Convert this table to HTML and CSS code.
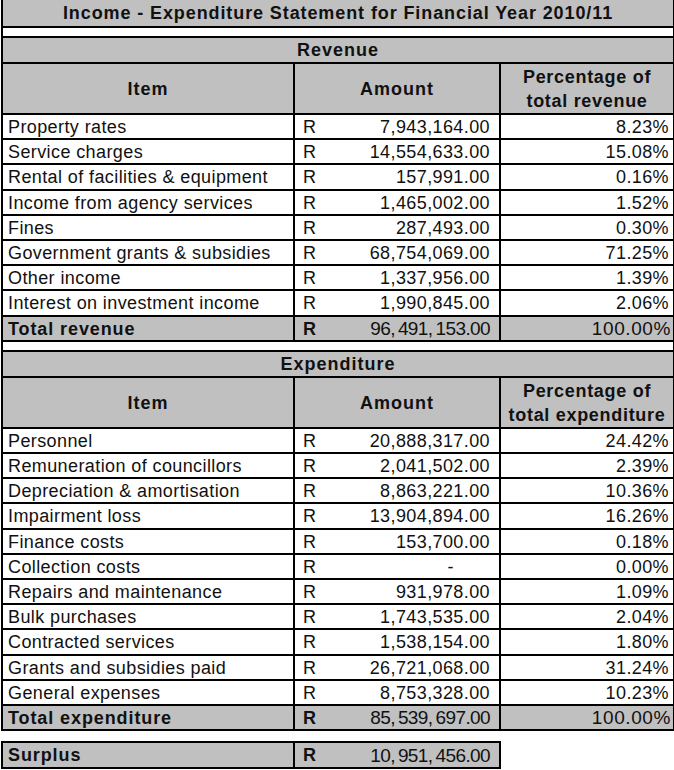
FILE: index.html
```html
<!DOCTYPE html>
<html lang="en">
<head>
<meta charset="utf-8">
<title>Income - Expenditure Statement</title>
<link rel="stylesheet" href="styles.css">
</head>
<body>
<table class="sheet">
  <colgroup><col class="c-item"><col class="c-amt"><col class="c-pct"></colgroup>
  <tr class="title"><td colspan="3">Income - Expenditure Statement for Financial Year 2010/11</td></tr>
  <tr class="gap"><td colspan="3"><div class="gap-in"></div></td></tr>
  <tr class="section"><td colspan="3">Revenue</td></tr>
  <tr class="head"><th>Item</th><th>Amount</th><th>Percentage of<br>total revenue</th></tr>
  <tr><td class="item">Property rates</td><td><div class="money"><span class="r">R</span><span>7,943,164.00</span></div></td><td class="pct">8.23%</td></tr>
  <tr><td class="item">Service charges</td><td><div class="money"><span class="r">R</span><span>14,554,633.00</span></div></td><td class="pct">15.08%</td></tr>
  <tr><td class="item">Rental of facilities &amp; equipment</td><td><div class="money"><span class="r">R</span><span>157,991.00</span></div></td><td class="pct">0.16%</td></tr>
  <tr><td class="item">Income from agency services</td><td><div class="money"><span class="r">R</span><span>1,465,002.00</span></div></td><td class="pct">1.52%</td></tr>
  <tr><td class="item">Fines</td><td><div class="money"><span class="r">R</span><span>287,493.00</span></div></td><td class="pct">0.30%</td></tr>
  <tr><td class="item">Government grants &amp; subsidies</td><td><div class="money"><span class="r">R</span><span>68,754,069.00</span></div></td><td class="pct">71.25%</td></tr>
  <tr><td class="item">Other income</td><td><div class="money"><span class="r">R</span><span>1,337,956.00</span></div></td><td class="pct">1.39%</td></tr>
  <tr><td class="item">Interest on investment income</td><td><div class="money"><span class="r">R</span><span>1,990,845.00</span></div></td><td class="pct">2.06%</td></tr>
  <tr class="total"><td class="item">Total revenue</td><td><div class="money"><span class="r">R</span><span class="tnum">96<span class="cm">,</span>491<span class="cm">,</span>153.00</span></div></td><td class="pct">100.00%</td></tr>
  <tr class="gap"><td colspan="3"><div class="gap-in"></div></td></tr>
  <tr class="section"><td colspan="3">Expenditure</td></tr>
  <tr class="head"><th>Item</th><th>Amount</th><th>Percentage of<br>total expenditure</th></tr>
  <tr><td class="item">Personnel</td><td><div class="money"><span class="r">R</span><span>20,888,317.00</span></div></td><td class="pct">24.42%</td></tr>
  <tr><td class="item">Remuneration of councillors</td><td><div class="money"><span class="r">R</span><span>2,041,502.00</span></div></td><td class="pct">2.39%</td></tr>
  <tr><td class="item">Depreciation &amp; amortisation</td><td><div class="money"><span class="r">R</span><span>8,863,221.00</span></div></td><td class="pct">10.36%</td></tr>
  <tr><td class="item">Impairment loss</td><td><div class="money"><span class="r">R</span><span>13,904,894.00</span></div></td><td class="pct">16.26%</td></tr>
  <tr><td class="item">Finance costs</td><td><div class="money"><span class="r">R</span><span>153,700.00</span></div></td><td class="pct">0.18%</td></tr>
  <tr><td class="item">Collection costs</td><td><div class="money"><span class="r">R</span><span class="dash">-</span></div></td><td class="pct">0.00%</td></tr>
  <tr><td class="item">Repairs and maintenance</td><td><div class="money"><span class="r">R</span><span>931,978.00</span></div></td><td class="pct">1.09%</td></tr>
  <tr><td class="item">Bulk purchases</td><td><div class="money"><span class="r">R</span><span>1,743,535.00</span></div></td><td class="pct">2.04%</td></tr>
  <tr><td class="item">Contracted services</td><td><div class="money"><span class="r">R</span><span>1,538,154.00</span></div></td><td class="pct">1.80%</td></tr>
  <tr><td class="item">Grants and subsidies paid</td><td><div class="money"><span class="r">R</span><span>26,721,068.00</span></div></td><td class="pct">31.24%</td></tr>
  <tr><td class="item">General expenses</td><td><div class="money"><span class="r">R</span><span>8,753,328.00</span></div></td><td class="pct">10.23%</td></tr>
  <tr class="total"><td class="item">Total expenditure</td><td><div class="money"><span class="r">R</span><span class="tnum">85<span class="cm">,</span>539<span class="cm">,</span>697.00</span></div></td><td class="pct">100.00%</td></tr>
</table>
<table class="sheet surplus">
  <colgroup><col class="c-item"><col class="c-amt"></colgroup>
  <tr class="total"><td class="item">Surplus</td><td><div class="money"><span class="r">R</span><span class="tnum">10<span class="cm">,</span>951<span class="cm">,</span>456.00</span></div></td></tr>
</table>
</body>
</html>
```
FILE: styles.css
```css
html, body {
  margin: 0;
  padding: 0;
  background: #fff;
}
body {
  font-family: "Liberation Sans", Arial, sans-serif;
  color: #111;
  font-size: 18px;
}
.sheet {
  border-collapse: collapse;
  table-layout: fixed;
  width: 672px;
  margin-left: 1px;
}
.c-item { width: 292px; }
.c-amt { width: 206px; }
.c-pct { width: 174px; }

.sheet td, .sheet th {
  border: 2px solid #000;
  padding: 1px 0 0 0;
  line-height: 22.2px;
  letter-spacing: 0.4px;
  white-space: nowrap;
  overflow: hidden;
}
.title td {
  background: #c0c0c0;
  font-weight: bold;
  text-align: center;
  line-height: 25px;
  border-top: none;
  letter-spacing: 0.9px;
}
.gap td {
  border-top: none;
  border-bottom: none;
  line-height: 0;
  padding: 0;
}
.gap-in { height: 8px; }
.section td {
  background: #c0c0c0;
  font-weight: bold;
  text-align: center;
  line-height: 23px;
  letter-spacing: 1px;
}
.head th {
  background: #c0c0c0;
  font-weight: bold;
  text-align: center;
  line-height: 24px;
  letter-spacing: 1px;
}
.head th:last-child { letter-spacing: 0.7px; }
.item {
  padding-left: 5px !important;
}
.money {
  display: flex;
  justify-content: space-between;
  padding: 0 9px 0 8px;
}
.pct {
  text-align: right;
  padding-right: 4px !important;
}
.dash { padding-right: 36px; }
.total td {
  background: #c0c0c0;
}
.total .item, .total .r {
  font-weight: bold;
  letter-spacing: 0.9px;
}
.tnum {
  font-size: 19px;
  letter-spacing: -0.6px;
}
.total .pct {
  font-size: 19px;
  letter-spacing: 0.6px;
  padding-right: 2px !important;
}
.cm { margin-right: 3px; }
.surplus {
  width: 498px;
  margin-top: 10px;
}
.surplus td {
  border-top: 2px solid #000;
  line-height: 23px;
}
```
